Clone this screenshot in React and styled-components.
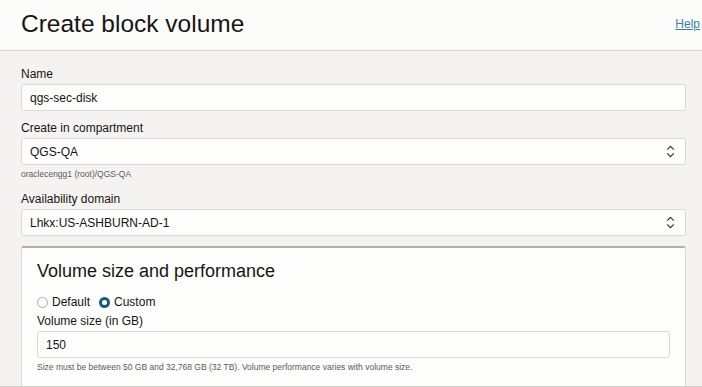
import React from 'react';
import styled, { createGlobalStyle } from 'styled-components';

const GlobalStyle = createGlobalStyle`
    html, body {
        margin: 0;
        padding: 0;
        background: #f4f3f2;
        font-family: "Liberation Sans", Arial, sans-serif;
        color: #161513;
        overflow: hidden;
    }
`

function Chevrons() {
    return (
        <svg width="9" height="13" viewBox="0 0 9 13" fill="none" stroke="#3c3b39" strokeWidth="1.3">
            <path d="M1.2 4.6 L4.5 1.4 L7.8 4.6" />
            <path d="M1.2 8.4 L4.5 11.6 L7.8 8.4" />
        </svg>
    )
}

function Field({ label, value, select, hint, space = 0 }) {
    return (
        <FieldWrap $space={space}>
            <Label>{label}</Label>
            <Box>
                <span>{value}</span>
                {select && <Chevrons />}
            </Box>
            {hint && <Hint>{hint}</Hint>}
        </FieldWrap>
    )
}

function App() {
    return (
        <Page>
            <GlobalStyle />
            <Header>
                <Title>Create block volume</Title>
                <HelpLink href="#">Help</HelpLink>
            </Header>
            <Content>
                <Field space={10} label="Name" value="qgs-sec-disk" />
                <Field space={12} label="Create in compartment" value="QGS-QA" select hint="oraclecengg1 (root)/QGS-QA" />
                <Field space={11} label="Availability domain" value="Lhkx:US-ASHBURN-AD-1" select />
                <Panel>
                    <PanelTitle>Volume size and performance</PanelTitle>
                    <RadioRow>
                        <RadioOption><Radio /> Default</RadioOption>
                        <RadioOption><Radio $checked /> Custom</RadioOption>
                    </RadioRow>
                    <Field
                        label="Volume size (in GB)"
                        value="150"
                        hint="Size must be between 50 GB and 32,768 GB (32 TB). Volume performance varies with volume size."
                    />
                </Panel>
            </Content>
        </Page>
    )
}

const Page = styled.div`
    width: 702px;
    height: 387px;
    display: flex;
    flex-direction: column;
    overflow: hidden;
    border-bottom: 1px solid #d3d1ce;
    box-sizing: border-box;
`

const Header = styled.header`
    height: 51px;
    flex-shrink: 0;
    box-sizing: border-box;
    background: #fcfcfb;
    border-bottom: 1px solid #d6d5d2;
    display: flex;
    align-items: flex-start;
    justify-content: space-between;
    padding: 0 2px 0 21px;
`

const Title = styled.h1`
    margin: 10px 0 0;
    font-size: 24.5px;
    font-weight: normal;
    line-height: 28px;
    color: #161513;
`

const HelpLink = styled.a`
    margin-top: 17px;
    font-size: 12px;
    line-height: 14px;
    color: #3d7fa8;
    text-decoration: underline;
`

const Content = styled.main`
    flex: 1;
    min-height: 0;
    padding: 16px 16px 0 21px;
    display: flex;
    flex-direction: column;
`

const FieldWrap = styled.div`
    display: flex;
    flex-direction: column;
    margin-bottom: ${p => p.$space}px;
`

const Label = styled.label`
    font-size: 12px;
    line-height: 15px;
    height: 15px;
    margin-bottom: 2px;
    color: #161513;
`

const Box = styled.div`
    height: 27px;
    box-sizing: border-box;
    background: #fdfdfc;
    border: 1px solid #dad9d6;
    border-radius: 3px;
    padding: 0 10px 0 8px;
    display: flex;
    align-items: center;
    justify-content: space-between;
    font-size: 12px;
    color: #161513;
`

const Hint = styled.div`
    font-size: 8.5px;
    line-height: 11px;
    color: #5c5a57;
    margin-top: 4px;
`

const Panel = styled.section`
    margin-top: -1px;
    flex: 1;
    box-sizing: border-box;
    background: #fdfdfc;
    border: 1px solid #dcdad7;
    border-bottom: none;
    border-top: 2px solid #b2afab;
    border-radius: 3px 3px 0 0;
    padding: 12px 15px 0 15px;
`

const PanelTitle = styled.h2`
    margin: 0;
    font-size: 18px;
    font-weight: normal;
    line-height: 22px;
    color: #161513;
`

const RadioRow = styled.div`
    display: flex;
    gap: 9px;
    margin: 13px 0 5px;
    height: 14px;
    align-items: center;
`

const RadioOption = styled.div`
    display: flex;
    align-items: center;
    gap: 4px;
    font-size: 12px;
    color: #161513;
`

const Radio = styled.span`
    width: 11px;
    height: 11px;
    box-sizing: border-box;
    border-radius: 50%;
    display: inline-block;
    border: ${p => p.$checked ? '3.5px solid #1e5a78' : '1px solid #aeaba7'};
    background: ${p => p.$checked ? '#ffffff' : '#fdfdfc'};
`

export default App;
